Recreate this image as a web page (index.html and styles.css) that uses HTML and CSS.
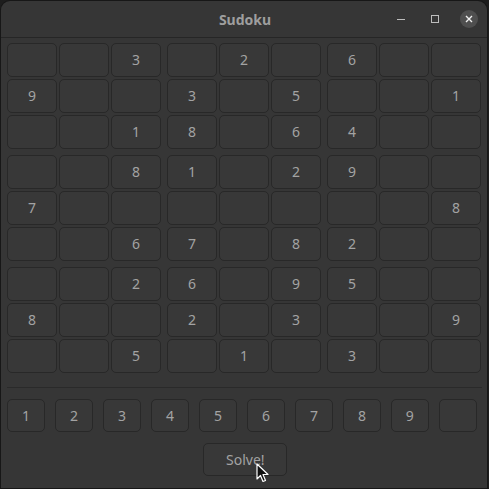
FILE: index.html
```html
<!DOCTYPE html>
<html>
<head>
<meta charset="utf-8">
<link rel="stylesheet" href="styles.css">
</head>
<body>
<div class="window">
  <div class="titlebar">
    <div class="title">Sudoku</div>
    <div class="controls">
      <span class="ctl min"><svg width="10" height="10" viewBox="0 0 10 10"><path d="M1 5.5h8" stroke="#bdbdbd" stroke-width="1"/></svg></span>
      <span class="ctl max"><svg width="10" height="10" viewBox="0 0 10 10"><rect x="1.5" y="1.5" width="7" height="7" fill="none" stroke="#bdbdbd" stroke-width="1"/></svg></span>
      <span class="ctl close"><svg width="10" height="10" viewBox="0 0 10 10"><path d="M2 2L8 8M8 2L2 8" stroke="#f0f0f0" stroke-width="1.4"/></svg></span>
    </div>
  </div>
  <div class="content">
    <div class="board">
      <div class="block"><div class="cell"></div><div class="cell"></div><div class="cell">3</div><div class="cell">9</div><div class="cell"></div><div class="cell"></div><div class="cell"></div><div class="cell"></div><div class="cell">1</div></div>
      <div class="block"><div class="cell"></div><div class="cell">2</div><div class="cell"></div><div class="cell">3</div><div class="cell"></div><div class="cell">5</div><div class="cell">8</div><div class="cell"></div><div class="cell">6</div></div>
      <div class="block"><div class="cell">6</div><div class="cell"></div><div class="cell"></div><div class="cell"></div><div class="cell"></div><div class="cell">1</div><div class="cell">4</div><div class="cell"></div><div class="cell"></div></div>
      <div class="block"><div class="cell"></div><div class="cell"></div><div class="cell">8</div><div class="cell">7</div><div class="cell"></div><div class="cell"></div><div class="cell"></div><div class="cell"></div><div class="cell">6</div></div>
      <div class="block"><div class="cell">1</div><div class="cell"></div><div class="cell">2</div><div class="cell"></div><div class="cell"></div><div class="cell"></div><div class="cell">7</div><div class="cell"></div><div class="cell">8</div></div>
      <div class="block"><div class="cell">9</div><div class="cell"></div><div class="cell"></div><div class="cell"></div><div class="cell"></div><div class="cell">8</div><div class="cell">2</div><div class="cell"></div><div class="cell"></div></div>
      <div class="block"><div class="cell"></div><div class="cell"></div><div class="cell">2</div><div class="cell">8</div><div class="cell"></div><div class="cell"></div><div class="cell"></div><div class="cell"></div><div class="cell">5</div></div>
      <div class="block"><div class="cell">6</div><div class="cell"></div><div class="cell">9</div><div class="cell">2</div><div class="cell"></div><div class="cell">3</div><div class="cell"></div><div class="cell">1</div><div class="cell"></div></div>
      <div class="block"><div class="cell">5</div><div class="cell"></div><div class="cell"></div><div class="cell"></div><div class="cell"></div><div class="cell">9</div><div class="cell">3</div><div class="cell"></div><div class="cell"></div></div>
    </div>
    <div class="separator"></div>
    <div class="numbers">
      <button class="num">1</button><button class="num">2</button><button class="num">3</button><button class="num">4</button><button class="num">5</button><button class="num">6</button><button class="num">7</button><button class="num">8</button><button class="num">9</button><button class="num"></button>
    </div>
    <div class="actions">
      <button class="solve">Solve!</button>
    </div>
  </div>
  <svg class="cursor" width="14" height="20" viewBox="0 0 14 20"><path d="M1 1L1 16L4.5 12.5L7 18.5L9.5 17.5L7 11.5L12 11.5Z" fill="#111" stroke="#fff" stroke-width="1.2" stroke-linejoin="round"/></svg>
</div>
</body>
</html>
```
FILE: styles.css
```css
html, body {
  margin: 0;
  padding: 0;
  background: #1d1d1d;
  width: 489px;
  height: 489px;
  overflow: hidden;
}
.window {
  position: relative;
  margin: 1px;
  width: 486px;
  height: 487px;
  background: #363636;
  border-radius: 9px 9px 0 0;
  box-shadow: 0 0 0 1px #171717;
  font-family: "Noto Sans", "DejaVu Sans", sans-serif;
  color: #a3a3a3;
}
.titlebar {
  height: 36px;
  border-bottom: 1px solid #262626;
  display: flex;
  align-items: center;
  justify-content: center;
  position: relative;
}
.title {
  font-weight: bold;
  font-size: 14px;
  color: #9e9e9e;
  margin-left: 2px;
}
.controls {
  position: absolute;
  right: 9px;
  top: 9px;
  display: flex;
  gap: 16px;
  align-items: center;
}
.ctl {
  width: 18px;
  height: 18px;
  border-radius: 50%;
  display: flex;
  align-items: center;
  justify-content: center;
}
.close {
  background: #4f4f4f;
}
.content {
  padding: 5.3px 0 0 6.3px;
}
.board {
  display: grid;
  grid-template-columns: repeat(3, 153.4px);
  grid-template-rows: repeat(3, 105.4px);
  gap: 6.6px;
}
.block {
  display: grid;
  grid-template-columns: repeat(3, 49.4px);
  grid-template-rows: repeat(3, 33.4px);
  gap: 2.6px;
}
.cell, .num, .solve {
  box-sizing: border-box;
  background: #383838;
  border: 1px solid #282828;
  border-radius: 5px;
  display: flex;
  align-items: center;
  justify-content: center;
  font-family: "Noto Sans", "DejaVu Sans", sans-serif;
  font-size: 14px;
  color: #a3a3a3;
  padding: 0;
}
.separator {
  margin-top: 14px;
  width: 475px;
  height: 1px;
  background: #2a2a2a;
}
.numbers {
  margin-top: 11.3px;
  display: flex;
  gap: 10.6px;
}
.num {
  width: 37.4px;
  height: 33.4px;
}
.actions {
  margin-top: 10.6px;
  display: flex;
  justify-content: center;
  width: 474px;
}
.solve {
  width: 84px;
  height: 33.4px;
  margin-left: 2px;
}
.cursor {
  position: absolute;
  left: 255px;
  top: 462px;
}
```
